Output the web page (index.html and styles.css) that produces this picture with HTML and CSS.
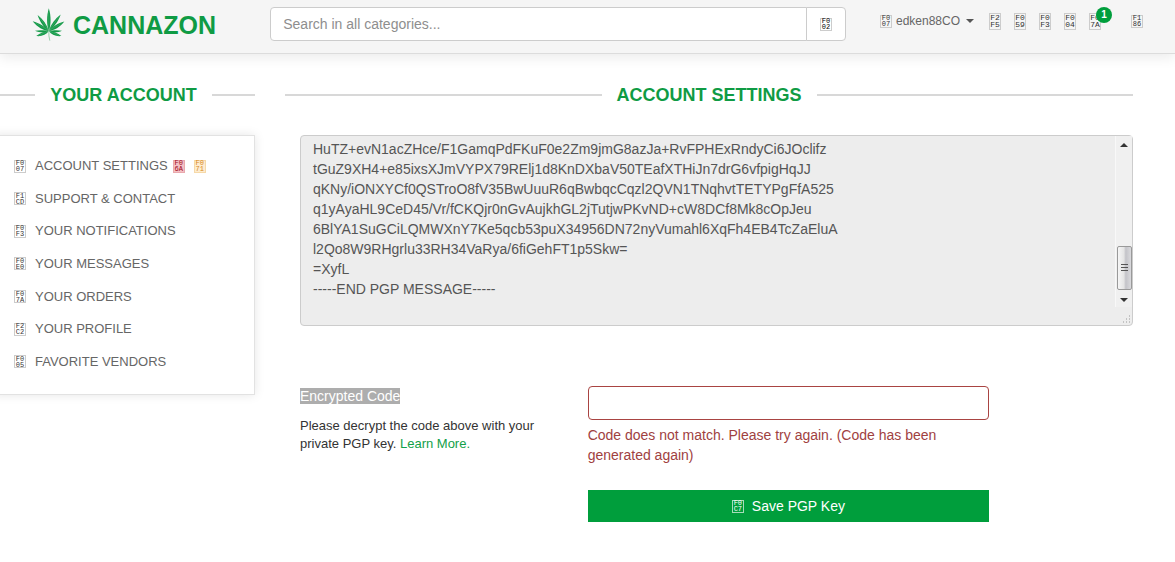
FILE: index.html
```html
<!DOCTYPE html>
<html lang="en">
<head>
<meta charset="utf-8">
<meta name="viewport" content="width=device-width, initial-scale=1">
<title>Cannazon - Account Settings</title>
<link rel="stylesheet" href="styles.css">
</head>
<body>
<header class="topbar">
  <a class="brand" href="#">
    <svg class="leaf" viewBox="0 0 98 100" aria-hidden="true">
      <g fill="#149a48">
        <path d="M50 70C43 50 43 24 50 1C57 24 57 50 50 70Z"/>
        <path d="M50 70C36 60 23 43 16 21C33 35 44 50 50 70Z"/>
        <path d="M50 70C64 60 78 43 86 20C68 34 56 50 50 70Z"/>
        <path d="M50 70C34 68 15 58 1 40C21 46 40 56 50 70Z"/>
        <path d="M50 70C66 68 84 58 97 41C78 46 60 56 50 70Z"/>
        <path d="M50 70C40 67 20 66 8 69C22 75 38 76 50 70Z"/>
        <path d="M50 70C60 67 78 66 90 69C77 75 62 76 50 70Z"/>
        <path d="M50 70C38 71 23 76 12 85C28 87 42 81 50 70Z"/>
        <path d="M50 70C62 71 77 76 88 85C71 87 58 81 50 70Z"/>
      </g>
      <path d="M50 68Q49 85 53 99" fill="none" stroke="#9bcfae" stroke-width="3"/>
      <path d="M50 12V68M22 29L50 68L80 28M10 46L50 68L88 47M18 84L50 69L82 84" fill="none" stroke="#6cc08c" stroke-width="1"/>
    </svg>
    <span>CANNAZON</span>
  </a>
  <form class="search">
    <input class="search-input" type="text" placeholder="Search in all categories..." aria-label="Search in all categories">
    <button class="search-button" type="button" aria-label="Search"><span class="hex"><span>F0</span><span>02</span></span></button>
  </form>
  <nav class="usernav">
    <a class="user" href="#"><span class="hex"><span>F0</span><span>07</span></span><span>edken88CO</span><span class="caret"></span></a>
    <a class="tool" href="#"><span class="hex tall"><span>F2</span><span>F5</span></span></a>
    <a class="tool" href="#"><span class="hex tall"><span>F0</span><span>59</span></span></a>
    <a class="tool" href="#"><span class="hex tall"><span>F0</span><span>F3</span></span></a>
    <a class="tool" href="#"><span class="hex tall"><span>F0</span><span>04</span></span></a>
    <a class="tool" href="#"><span class="hex tall"><span>F0</span><span>7A</span></span><span class="badge">1</span></a>
    <a class="tool logout" href="#"><span class="hex"><span>F1</span><span>86</span></span></a>
  </nav>
</header>

<div class="page">
  <aside class="sidebar">
    <h2 class="title">YOUR ACCOUNT</h2>
    <ul class="menu">
      <li><a href="#"><span class="hex"><span>F0</span><span>07</span></span>ACCOUNT SETTINGS</a><span class="hex red"><span>F0</span><span>6A</span></span><span class="hex amber"><span>F0</span><span>71</span></span></li>
      <li><a href="#"><span class="hex"><span>F1</span><span>CD</span></span>SUPPORT &amp; CONTACT</a></li>
      <li><a href="#"><span class="hex"><span>F0</span><span>F3</span></span>YOUR NOTIFICATIONS</a></li>
      <li><a href="#"><span class="hex"><span>F0</span><span>E0</span></span>YOUR MESSAGES</a></li>
      <li><a href="#"><span class="hex"><span>F0</span><span>7A</span></span>YOUR ORDERS</a></li>
      <li><a href="#"><span class="hex"><span>F2</span><span>C2</span></span>YOUR PROFILE</a></li>
      <li><a href="#"><span class="hex"><span>F0</span><span>05</span></span>FAVORITE VENDORS</a></li>
    </ul>
  </aside>

  <main class="content">
    <h1 class="title">ACCOUNT SETTINGS</h1>
    <form class="settings">
      <div class="message">
        <textarea class="pgp" rows="8" readonly aria-label="PGP message">HuTZ+evN1acZHce/F1GamqPdFKuF0e2Zm9jmG8azJa+RvFPHExRndyCi6JOclifz
tGuZ9XH4+e85ixsXJmVYPX79RElj1d8KnDXbaV50TEafXTHiJn7drG6vfpigHqJJ
qKNy/iONXYCf0QSTroO8fV35BwUuuR6qBwbqcCqzl2QVN1TNqhvtTETYPgFfA525
q1yAyaHL9CeD45/Vr/fCKQjr0nGvAujkhGL2jTutjwPKvND+cW8DCf8Mk8cOpJeu
6BlYA1SuGCiLQMWXnY7Ke5qcb53puX34956DN72nyVumahl6XqFh4EB4TcZaEluA
l2Qo8W9RHgrlu33RH34VaRya/6fiGehFT1p5Skw=
=XyfL
-----END PGP MESSAGE-----</textarea>
        <div class="scrollbar" aria-hidden="true">
          <span class="arrow up"></span>
          <span class="thumb"></span>
          <span class="arrow down"></span>
        </div>
        <svg class="grip" viewBox="0 0 9 9" aria-hidden="true"><path d="M7 1h1M7 4h1M4 4h1M7 7h1M4 7h1M1 7h1" stroke="#999" stroke-width="1"/></svg>
      </div>
      <div class="row">
        <div class="describe">
          <label class="code-label" for="code"><span>Encrypted Code</span></label>
          <p class="hint">Please decrypt the code above with your private PGP key. <a href="#">Learn More.</a></p>
        </div>
        <div class="entry">
          <input class="code-input" id="code" type="text" aria-describedby="code-error">
          <p class="error" id="code-error">Code does not match. Please try again. (Code has been generated again)</p>
          <button class="save" type="button"><span class="hex"><span>F0</span><span>C7</span></span>Save PGP Key</button>
        </div>
      </div>
    </form>
  </main>
</div>
</body>
</html>
```
FILE: styles.css
```css
* { box-sizing: border-box; }

body {
  margin: 0;
  background: #fff;
  color: #333;
  font: 14px/20px "Liberation Sans", Arial, sans-serif;
  overflow-x: hidden;
}

a { color: inherit; text-decoration: none; }
input, button, textarea { font: inherit; margin: 0; }

/* boxed four-digit icon */
.hex {
  display: inline-flex;
  flex: none;
  flex-direction: column;
  justify-content: center;
  width: 12px;
  height: 13px;
  border: 1px solid #ccc;
  color: #333;
  font: 7px/6px "Liberation Mono", monospace;
  text-align: center;
}
.hex span { display: block; height: 6px; }
.hex.tall { height: 17px; font-size: 8px; line-height: 7px; }
.hex.tall span { height: 7px; }
.hex.red { color: #a00818; border-color: #e9a9ae; background: #f3c0c4; }
.hex.amber { color: #d98a1c; border-color: #f6d9a8; background: #fdecd0; }

/* header */
.topbar {
  display: grid;
  grid-template-columns: 23% 49% 28%;
  align-items: start;
  height: 54px;
  background: #f5f5f5;
  border-bottom: 1px solid #dcdcdc;
  box-shadow: 0 4px 12px rgba(0, 0, 0, .08);
}
.brand {
  display: flex;
  align-items: center;
  gap: 8px;
  padding: 8px 0 0 32px;
  color: #0f9b44;
  font-size: 25px;
  line-height: 32px;
  font-weight: bold;
}
.leaf { width: 33px; height: 33px; flex: none; }

.search { display: flex; padding-top: 7px; }
.search-input {
  flex: 1;
  min-width: 0;
  height: 34px;
  padding: 6px 12px;
  border: 1px solid #ccc;
  border-radius: 4px 0 0 4px;
  background: #fff;
}
.search-input::placeholder { color: #8e8e8e; opacity: 1; }
.search-button {
  display: flex;
  align-items: center;
  justify-content: center;
  width: 40px;
  height: 34px;
  margin-left: -1px;
  padding: 0;
  border: 1px solid #ccc;
  border-radius: 0 4px 4px 0;
  background: #fff;
}
.search-button .hex { color: #000; }

.usernav {
  display: flex;
  align-items: center;
  gap: 13px;
  height: 32px;
  margin-top: 5px;
  padding-left: 34px;
  color: #666;
  font-size: 12px;
}
.user { display: flex; align-items: center; gap: 4px; margin-right: 2px; }
.caret {
  margin-left: 2px;
  border: 4px solid transparent;
  border-top-color: #555;
  border-bottom: 0;
}
.tool { position: relative; display: flex; }
.logout { margin-left: 17px; }
.badge {
  position: absolute;
  left: 7px;
  top: -6px;
  width: 16px;
  height: 16px;
  border-radius: 50%;
  background: #009e3c;
  color: #fff;
  font-size: 10px;
  line-height: 16px;
  font-weight: bold;
  text-align: center;
}

/* page columns */
.page { display: flex; gap: 30px; padding: 31px 42px 40px 0; }
.sidebar { flex: none; width: 263px; margin-left: -8px; }
.content { flex: 1; min-width: 0; }

.title {
  display: flex;
  align-items: center;
  gap: 15px;
  margin: 0 0 30px;
  color: #0f9b44;
  font-size: 18px;
  line-height: 20px;
  font-weight: bold;
}
.title::before, .title::after {
  content: "";
  flex: 1;
  height: 2px;
  background: #d8d8d8;
}

.menu {
  display: flex;
  flex-direction: column;
  justify-content: space-between;
  min-height: 260px;
  margin: 0;
  padding: 20px 21px 22px;
  border: 1px solid #e2e2e2;
  box-shadow: 0 0 10px rgba(0, 0, 0, .1);
  list-style: none;
  color: #666;
  font-size: 13px;
}
.menu li { display: flex; align-items: center; gap: 9px; }
.menu a { display: flex; align-items: center; gap: 9px; }
.menu .red { margin-left: -4px; }

/* settings form */
.message { position: relative; margin-left: 15px; }
.pgp {
  display: block;
  width: 100%;
  height: 191px;
  padding: 3px 28px 6px 12px;
  border: 1px solid #ccc;
  border-radius: 4px;
  background: #ededed;
  color: #555;
  resize: none;
  overflow: hidden;
}
.scrollbar {
  position: absolute;
  top: 1px;
  right: 1px;
  display: flex;
  flex-direction: column;
  align-items: center;
  width: 17px;
  height: 171px;
  border-left: 1px solid #f8f8f8;
  background: #f0f0f0;
}
.arrow { border: 4px solid transparent; }
.up { margin-top: 7px; border-top: 0; border-bottom-color: #333; }
.down { margin: 8px 0 5px; border-bottom: 0; border-top-color: #333; }
.thumb {
  width: 15px;
  height: 44px;
  margin-top: auto;
  border: 1px solid #999;
  border-radius: 2px;
  background:
    repeating-linear-gradient(#555 0 1px, transparent 1px 3px) center / 7px 9px no-repeat,
    linear-gradient(90deg, #f6f6f6, #e4e4e4 45%, #c3c3c8 60%, #dadadd);
}
.grip { position: absolute; right: 2px; bottom: 2px; width: 9px; height: 9px; }

.row {
  display: grid;
  grid-template-columns: 4fr 6fr 2fr;
  margin: 60px -15px 0 0;
}
.describe, .entry { padding: 0 15px; }
.code-label { display: block; line-height: 20px; }
.code-label span { background: #adadad; color: #fff; }
.hint { margin: 11px 0 0; font-size: 13px; line-height: 18px; }
.hint a { color: #12a049; }
.code-input {
  display: block;
  width: 100%;
  height: 34px;
  padding: 6px 12px;
  border: 1px solid #a94442;
  border-radius: 4px;
  background: #fff;
}
.error { margin: 5px 0 25px; color: #a0413f; }
.save {
  display: flex;
  align-items: center;
  justify-content: center;
  gap: 8px;
  width: 100%;
  height: 32px;
  padding: 0;
  border: 0;
  background: #009e3c;
  color: #fff;
}
.save .hex { color: #fff; border-color: #a6dcb9; }
```
